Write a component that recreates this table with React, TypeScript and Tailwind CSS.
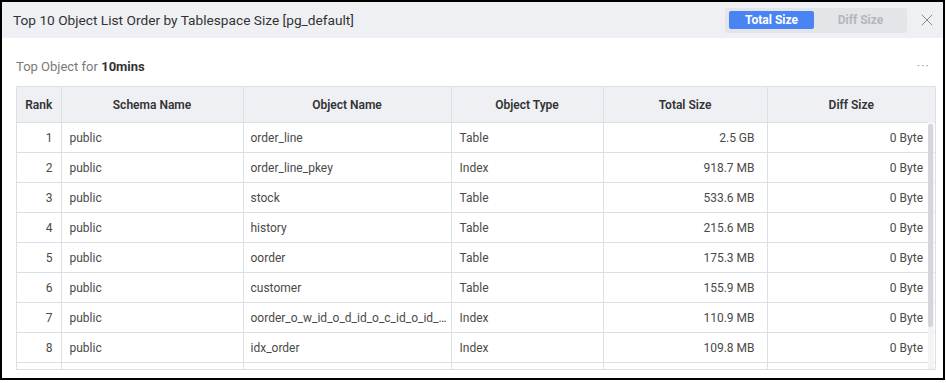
import { X } from "lucide-react";

const rows = [
  { rank: "1", schema: "public", name: "order_line", type: "Table", total: "2.5 GB", diff: "0 Byte" },
  { rank: "2", schema: "public", name: "order_line_pkey", type: "Index", total: "918.7 MB", diff: "0 Byte" },
  { rank: "3", schema: "public", name: "stock", type: "Table", total: "533.6 MB", diff: "0 Byte" },
  { rank: "4", schema: "public", name: "history", type: "Table", total: "215.6 MB", diff: "0 Byte" },
  { rank: "5", schema: "public", name: "oorder", type: "Table", total: "175.3 MB", diff: "0 Byte" },
  { rank: "6", schema: "public", name: "customer", type: "Table", total: "155.9 MB", diff: "0 Byte" },
  { rank: "7", schema: "public", name: "oorder_o_w_id_o_d_id_o_c_id_o_id_key", type: "Index", total: "110.9 MB", diff: "0 Byte" },
  { rank: "8", schema: "public", name: "idx_order", type: "Index", total: "109.8 MB", diff: "0 Byte" },
  // next row is only peeking out under the scroll edge
  { rank: "", schema: "", name: "", type: "", total: "", diff: "" },
];

function Cols() {
  return (
    <colgroup>
      <col className="w-[44px]" />
      <col className="w-[182px]" />
      <col className="w-[208px]" />
      <col className="w-[152px]" />
      <col className="w-[164px]" />
      <col className="w-[168px]" />
    </colgroup>
  );
}

export default function App() {
  return (
    <div className="w-[946px] h-[383px] bg-white font-['Roboto',sans-serif]">
      <div className="w-[945px] h-[380px] border-2 border-black flex flex-col overflow-hidden">
        {/* header */}
        <div className="h-[36px] shrink-0 bg-[#eef0f3] flex items-center pl-[11px] pr-[6px]">
          <h1 className="text-[13.7px] text-[#333] flex-1">Top 10 Object List Order by Tablespace Size [pg_default]</h1>
          <div className="flex items-center bg-[#e3e5e9] rounded-[3px] h-[25px] w-[182px] pl-[4px]">
            <button className="h-[18px] w-[85px] bg-[#4a84f4] text-white text-[12px] font-bold rounded-[2px]">
              Total Size
            </button>
            <button className="h-[18px] flex-1 text-[#b3b6bb] text-[12px] font-bold">Diff Size</button>
          </div>
          <X className="ml-[10px] w-[20px] h-[20px] text-[#888]" strokeWidth={1.2} />
        </div>

        {/* body */}
        <div className="flex-1 pl-[14px] pr-[7px]">
          <div className="h-[48px] flex items-center justify-between pr-[6px]">
            <div className="text-[13px] text-[#7a7a7a] pt-[10px]">
              Top Object for <span className="font-bold text-[#333]">10mins</span>
            </div>
            <div className="text-[13px] text-[#999] tracking-[1px] pt-[8px]">···</div>
          </div>

          <div className="w-[920px] border border-[#dcdfe4]">
            <table className="w-full table-fixed border-collapse text-[12px]">
              <Cols />
              <thead>
                <tr className="h-[35px] bg-[#eef0f3] text-[#333]">
                  <th className="border-r border-[#dcdfe4] font-semibold">Rank</th>
                  <th className="border-r border-[#dcdfe4] font-semibold">Schema Name</th>
                  <th className="border-r border-[#dcdfe4] font-semibold">Object Name</th>
                  <th className="border-r border-[#dcdfe4] font-semibold">Object Type</th>
                  <th className="border-r border-[#dcdfe4] font-semibold">Total Size</th>
                  <th className="font-semibold">Diff Size</th>
                </tr>
              </thead>
            </table>
            <div className="relative h-[247px] overflow-hidden">
              <table className="w-full table-fixed border-collapse text-[12px] text-[#4a4a4a]">
                <Cols />
                <tbody>
                  {rows.map((r, i) => (
                    <tr key={i} className="h-[30px] border-t border-[#dcdfe4]">
                      <td className="border-r border-[#dcdfe4] text-right pr-[8px]">{r.rank}</td>
                      <td className="border-r border-[#dcdfe4] pl-[8px]">{r.schema}</td>
                      <td className="border-r border-[#dcdfe4] pl-[7px] pr-[2px] truncate">{r.name}</td>
                      <td className="border-r border-[#dcdfe4] pl-[8px]">{r.type}</td>
                      <td className="border-r border-[#dcdfe4] text-right pr-[12px]">{r.total}</td>
                      <td className="text-right pr-[12px]">{r.diff}</td>
                    </tr>
                  ))}
                </tbody>
              </table>
              {/* scrollbar */}
              <div className="absolute right-[1px] top-0 bottom-0 w-[6px] bg-[#f3f4f6]">
                <div className="mt-[2px] h-[203px] w-[5px] bg-[#d4d6da] rounded-[2px]" />
              </div>
            </div>
          </div>
        </div>
      </div>
    </div>
  );
}
